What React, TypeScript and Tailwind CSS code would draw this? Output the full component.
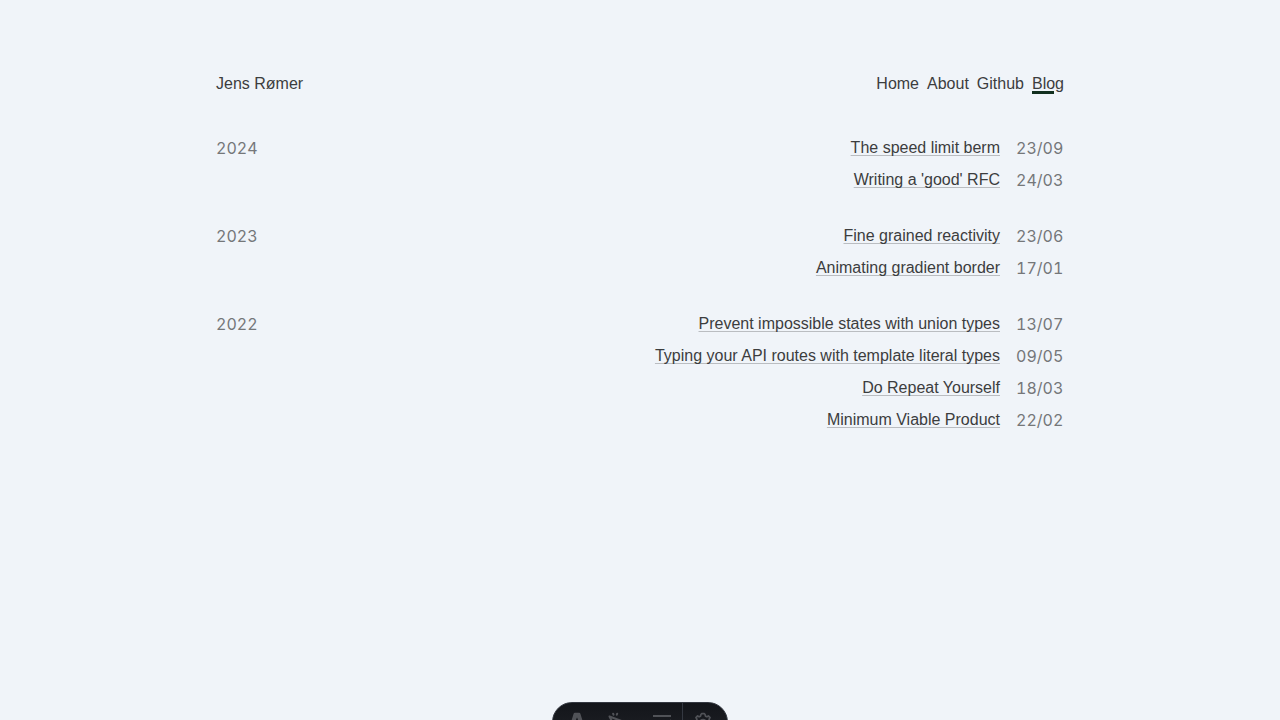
import React from "react";

type Post = { title: string; date: string };
type Year = { year: string; posts: Post[] };

const years: Year[] = [
  {
    year: "2024",
    posts: [
      { title: "The speed limit berm", date: "23/09" },
      { title: "Writing a 'good' RFC", date: "24/03" },
    ],
  },
  {
    year: "2023",
    posts: [
      { title: "Fine grained reactivity", date: "23/06" },
      { title: "Animating gradient border", date: "17/01" },
    ],
  },
  {
    year: "2022",
    posts: [
      { title: "Prevent impossible states with union types", date: "13/07" },
      { title: "Typing your API routes with template literal types", date: "09/05" },
      { title: "Do Repeat Yourself", date: "18/03" },
      { title: "Minimum Viable Product", date: "22/02" },
    ],
  },
];

function Header() {
  return (
    <header className="flex items-center justify-between">
      <span>Jens Rømer</span>
      <nav className="flex gap-2">
        <a href="#home">Home</a>
        <a href="#about">About</a>
        <a href="#github">Github</a>
        <a href="#blog" aria-current="page" className="relative">
          Blog
          <span className="absolute bottom-0.5 left-0 h-[3px] w-[22px] bg-[#12301f]" />
        </a>
      </nav>
    </header>
  );
}

function YearSection({ year, posts }: Year) {
  return (
    <section className="flex justify-between">
      <h2 className="font-['Inter','Liberation_Sans',sans-serif] leading-8 tabular-nums text-[#757779]">{year}</h2>
      <ul>
        {posts.map((post) => (
          <li key={post.title} className="flex h-8 items-center justify-end gap-4">
            <a href="#post" className="underline decoration-[#babdc1] decoration-1 underline-offset-2 [text-decoration-skip-ink:none]">
              {post.title}
            </a>
            <time className="w-12 font-['Inter','Liberation_Sans',sans-serif] tabular-nums text-[#757779]">{post.date}</time>
          </li>
        ))}
      </ul>
    </section>
  );
}

function DevToolbar() {
  return (
    <div className="fixed -bottom-[22px] left-1/2 flex h-10 w-44 -translate-x-1/2 overflow-hidden rounded-full border border-[#343841] bg-linear-to-b from-[#13151a] to-[#202227] text-[#505257]">
      <button aria-label="Menu" className="flex flex-1 items-center justify-center pl-1">
        <svg width="20" height="20" viewBox="0 0 20 20" fill="currentColor">
          <path d="M6.6 1.800Q6.900.800 7.900.800h4.200q1 0 1.300 1l4 13q-2-.8-4.100-1.100L10.300 6q-.3-.8-.6 0l-3 7.700q-2.100.3-4.100 1.100ZM6.500 15q3.500 1.500 7 0 .5 2-1.500 3.300L10 20q-.5-2-2-2.500Q6 16.500 6.500 15Z" />
        </svg>
      </button>
      <button aria-label="Inspect" className="flex flex-1 items-center justify-center pr-1">
        <svg width="20" height="20" viewBox="0 0 20 20" fill="none" stroke="currentColor" strokeWidth="2">
          <path d="m2.500 4.500 14 5.200-5 2.300-2.300 5.500Z" strokeLinejoin="round" />
          <path d="m6.500 2.700-.4-1M9.800 2.700l.4-1" strokeLinecap="round" />
        </svg>
      </button>
      <button aria-label="Audit" className="flex flex-1 items-center justify-center">
        <svg width="20" height="20" viewBox="0 0 20 20" fill="none" stroke="currentColor" strokeWidth="2">
          <path d="M1 4h18M1 10h8M1 16h8M12 13l2 2 5-7" />
        </svg>
      </button>
      <button aria-label="Settings" className="flex flex-1 items-center justify-center border-l border-[#343841] pr-1">
        <svg width="20" height="20" viewBox="0 0 24 24" fill="none" stroke="currentColor" strokeWidth="2" strokeLinejoin="round">
          <path d="m9.500 3 1-1h3l1 1 .4 2 1.800.8L18.500 4.700l2 2-1.300 2 .8 1.800 2 .5v3l-2 .5-.8 1.800 1.300 2-2 2-1.800-1.100-1.800.8-.4 2-1 1h-3l-1-1-.4-2-1.800-.8-1.800 1.100-2-2 1.300-2-.8-1.800-2-.5v-3l2-.5.8-1.800-1.300-2 2-2 1.800 1.100 1.800-.8Z" />
          <circle cx="12" cy="12.500" r="3.500" />
        </svg>
      </button>
    </div>
  );
}

export default function App() {
  return (
    <div className="min-h-screen bg-[#f0f4f9] font-['Liberation_Sans',sans-serif] text-base text-[#3c3d3e]">
      <div className="mx-auto max-w-4xl px-6 pt-[72px] pb-12">
        <Header />
        <main className="mt-9 flex flex-col gap-6">
          {years.map((entry) => (
            <YearSection key={entry.year} {...entry} />
          ))}
        </main>
      </div>
      <DevToolbar />
    </div>
  );
}
